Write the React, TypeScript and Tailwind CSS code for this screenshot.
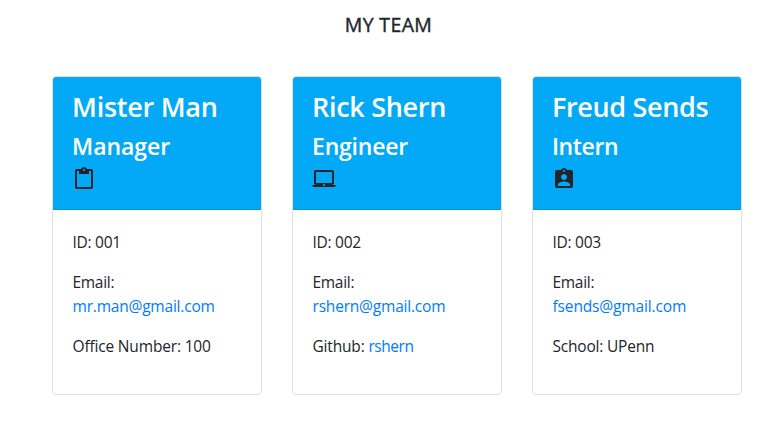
import type { ReactNode } from "react";

const icons = {
  clipboard:
    "M19 2h-4.18C14.4.84 13.3 0 12 0c-1.3 0-2.4.84-2.82 2H5c-1.1 0-2 .9-2 2v16c0 1.1.9 2 2 2h14c1.1 0 2-.9 2-2V4c0-1.1-.9-2-2-2zm-7 0c.55 0 1 .45 1 1s-.45 1-1 1-1-.45-1-1 .45-1 1-1zm7 18H5V4h2v3h10V4h2v16z",
  laptop:
    "M20 18c1.1 0 1.99-.9 1.99-2L22 5c0-1.1-.9-2-2-2H4c-1.1 0-2 .9-2 2v11c0 1.1.9 2 2 2H0c0 1.1.9 2 2 2h20c1.1 0 2-.9 2-2h-4zM4 5h16v11H4V5zm8 14c-.55 0-1-.45-1-1s.45-1 1-1 1 .45 1 1-.45 1-1 1z",
  badge:
    "M19 3h-4.18C14.4 1.84 13.3 1 12 1c-1.3 0-2.4.84-2.82 2H5c-1.1 0-2 .9-2 2v14c0 1.1.9 2 2 2h14c1.1 0 2-.9 2-2V5c0-1.1-.9-2-2-2zm-7 0c.55 0 1 .45 1 1s-.45 1-1 1-1-.45-1-1 .45-1 1-1zm0 4c1.66 0 3 1.34 3 3s-1.34 3-3 3-3-1.34-3-3 1.34-3 3-3zm6 12H6v-1.4c0-2 4-3.1 6-3.1s6 1.1 6 3.1V19z",
};

type CardProps = {
  name: string;
  role: string;
  icon: keyof typeof icons;
  id: string;
  email: string;
  nameClass: string;
  roleClass: string;
  emailClass: string;
  children: ReactNode;
};

function Card({ name, role, icon, id, email, nameClass, roleClass, emailClass, children }: CardProps) {
  return (
    <article className="flex h-[319px] w-[210px] flex-col overflow-hidden rounded-[4px] border border-[#dfdfdf] bg-white">
      <header className="h-[133px] border-b border-[#0595d9] bg-[#03a9f6] pl-[19px] pt-3 text-white">
        <h3 className={`mb-2 h-[34px] whitespace-nowrap text-[27px] font-semibold leading-[35px] ${nameClass}`}>{name}</h3>
        <h4 className={`h-[29px] whitespace-nowrap text-[23px] font-semibold leading-[30px] ${roleClass}`}>{role}</h4>
        <svg className="mt-[7px] size-6 text-[#212529]" viewBox="0 0 24 24" fill="currentColor">
          <path d={icons[icon]} />
        </svg>
      </header>
      <div className="flex flex-col gap-4 pl-[19.5px] pt-5 leading-6">
        <p className="tracking-[-0.27px]">ID: {id}</p>
        <p>
          <span className="tracking-[-0.3px]">Email:</span>
          <br />
          <a className={`text-[#007bff] ${emailClass}`}>{email}</a>
        </p>
        {children}
      </div>
    </article>
  );
}

export default function App() {
  return (
    <main className="h-[425px] w-[783px] overflow-hidden bg-white font-['Open_Sans','Noto_Sans',sans-serif] text-[15.5px] text-[#212529]">
      <h1 className="h-[76px] pr-[6px] pt-[13px] text-center text-[19.5px] font-medium leading-6 tracking-[0.35px] [-webkit-text-stroke:0.4px_currentColor]">MY TEAM</h1>
      <section className="flex gap-[30px] pl-[52px]">
        <Card name="Mister Man" role="Manager" icon="clipboard" id="001" email="mr.man@gmail.com"
          nameClass="tracking-[-0.25px]" roleClass="tracking-[-0.05px]" emailClass="tracking-[-0.21px]">
          <p className="tracking-[-0.17px]">Office Number: 100</p>
        </Card>
        <Card name="Rick Shern" role="Engineer" icon="laptop" id="002" email="rshern@gmail.com"
          nameClass="tracking-[-0.3px]" roleClass="tracking-[-0.2px]" emailClass="tracking-[-0.2px]">
          <p className="tracking-[-0.17px]">Github: <a className="tracking-[-0.45px] text-[#007bff]">rshern</a></p>
        </Card>
        <Card name="Freud Sends" role="Intern" icon="badge" id="003" email="fsends@gmail.com"
          nameClass="tracking-[-0.35px]" roleClass="tracking-[-0.4px]" emailClass="tracking-[-0.14px]">
          <p className="tracking-[-0.2px]">School: UPenn</p>
        </Card>
      </section>
    </main>
  );
}
